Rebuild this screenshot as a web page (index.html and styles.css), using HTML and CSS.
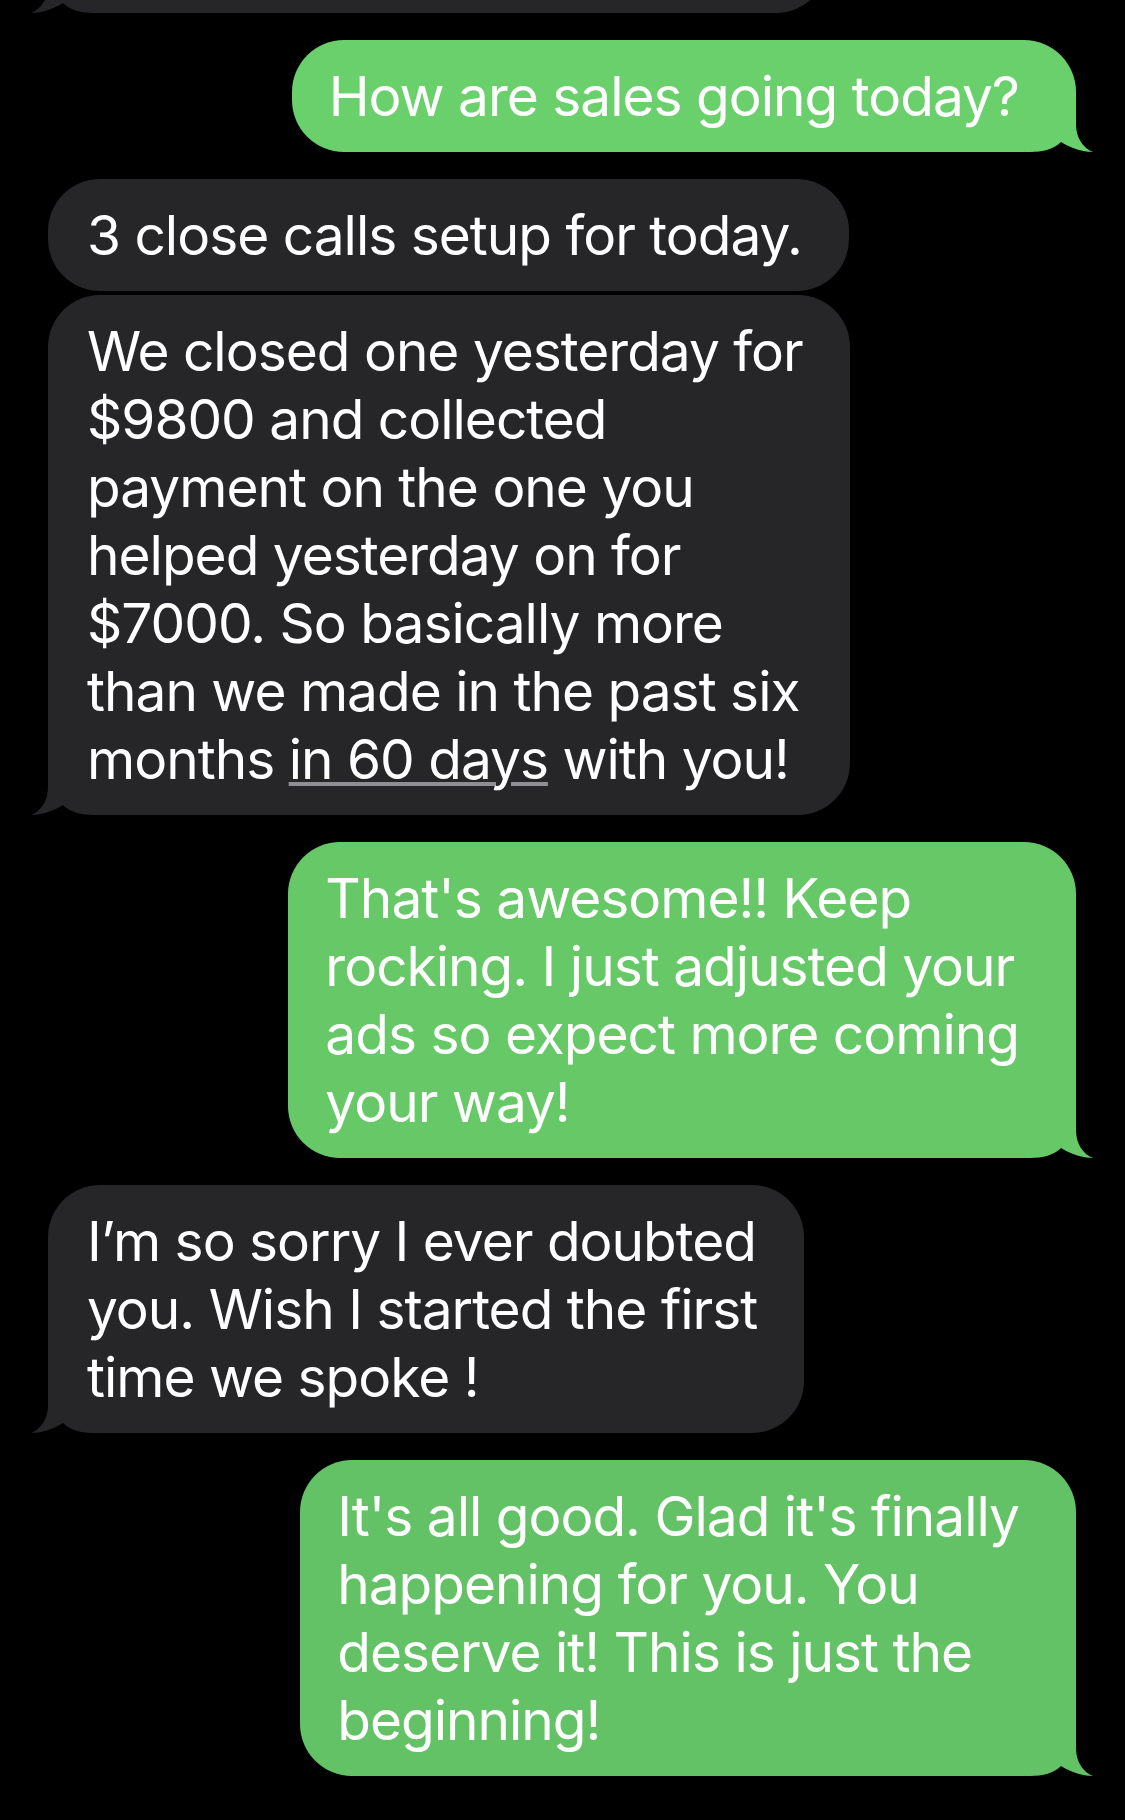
FILE: index.html
```html
<!DOCTYPE html>
<html lang="en">
<head>
<meta charset="utf-8">
<title>Messages</title>
<link rel="stylesheet" href="styles.css">
</head>
<body>
<main class="thread">
  <div class="bubble recv partial">&nbsp;<svg class="tail" viewBox="-50 -60 70 60" width="70" height="60"><path d="M0 -60 L0 -28 C0 -14 7 -4 17 0 C9 0 -4 -3 -15 -10 C-22 -3 -33 0 -46 0 L-50 0 L-50 -60 Z"/></svg></div>

  <div class="bubble sent g1">How are sales going today?<svg class="tail" viewBox="-50 -60 70 60" width="70" height="60"><path d="M0 -60 L0 -28 C0 -14 7 -4 17 0 C9 0 -4 -3 -15 -10 C-22 -3 -33 0 -46 0 L-50 0 L-50 -60 Z"/></svg></div>

  <div class="bubble recv">3 close calls setup for today.</div>
  <div class="bubble recv cont">We closed one yesterday for<br>$9800 and collected<br>payment on the one you<br>helped yesterday on for<br>$7000. So basically more<br>than we made in the past six<br>months <span class="link">in 60 days</span> with you!<svg class="tail" viewBox="-50 -60 70 60" width="70" height="60"><path d="M0 -60 L0 -28 C0 -14 7 -4 17 0 C9 0 -4 -3 -15 -10 C-22 -3 -33 0 -46 0 L-50 0 L-50 -60 Z"/></svg></div>

  <div class="bubble sent g2">That's awesome!! Keep<br>rocking. I just adjusted your<br>ads so expect more coming<br>your way!<svg class="tail" viewBox="-50 -60 70 60" width="70" height="60"><path d="M0 -60 L0 -28 C0 -14 7 -4 17 0 C9 0 -4 -3 -15 -10 C-22 -3 -33 0 -46 0 L-50 0 L-50 -60 Z"/></svg></div>

  <div class="bubble recv">I’m so sorry I ever doubted<br>you. Wish I started the first<br>time we spoke !<svg class="tail" viewBox="-50 -60 70 60" width="70" height="60"><path d="M0 -60 L0 -28 C0 -14 7 -4 17 0 C9 0 -4 -3 -15 -10 C-22 -3 -33 0 -46 0 L-50 0 L-50 -60 Z"/></svg></div>

  <div class="bubble sent g3">It's all good. Glad it's finally<br>happening for you. You<br>deserve it! This is just the<br>beginning!<svg class="tail" viewBox="-50 -60 70 60" width="70" height="60"><path d="M0 -60 L0 -28 C0 -14 7 -4 17 0 C9 0 -4 -3 -15 -10 C-22 -3 -33 0 -46 0 L-50 0 L-50 -60 Z"/></svg></div>
</main>
</body>
</html>
```

FILE: styles.css
```css
html, body {
  margin: 0;
  padding: 0;
  background: #000;
}

body {
  width: 1125px;
  height: 1820px;
  overflow: hidden;
  font-family: "Inter", "Noto Sans", sans-serif;
  -webkit-font-smoothing: antialiased;
}

.thread {
  display: flex;
  flex-direction: column;
  gap: 27px;
  padding: 0 49px 0 48px;
}

.bubble {
  position: relative;
  z-index: 0;
  font-size: 55px;
  line-height: 68px;
  letter-spacing: -1px;
  color: #fff;
  white-space: nowrap;
  padding: 22px 0;
  border-radius: 52px;
}

.recv {
  align-self: flex-start;
  background: #262629;
  fill: #262629;
  padding-left: 39px;
  padding-right: 47px;
}

.sent {
  align-self: flex-end;
  padding-left: 37px;
  padding-right: 57px;
}

.g1 { background: #6ad06b; fill: #6ad06b; }
.g2 { background: #66c867; fill: #66c867; }
.g3 { background: #63c265; fill: #63c265; }

.partial {
  margin-top: -99px;
  width: 780px;
  box-sizing: border-box;
}

.cont {
  margin-top: -23px;
}

.tail {
  position: absolute;
  z-index: -1;
  bottom: 0;
  display: block;
}

.sent .tail {
  right: -20px;
}

.recv .tail {
  left: -20px;
  transform: scaleX(-1);
}

.link {
  text-decoration: underline;
  text-decoration-color: #8e8e93;
  text-decoration-thickness: 4px;
  text-underline-offset: 3px;
  text-decoration-skip-ink: auto;
}
```
